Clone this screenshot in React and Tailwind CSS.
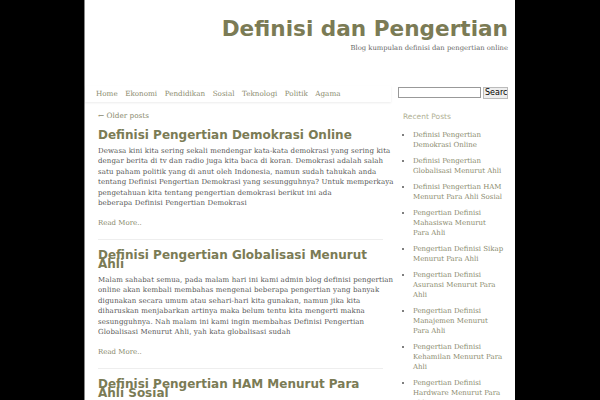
const posts = [
  {
    title: ['Definisi Pengertian Demokrasi Online'],
    lines: [
      'Dewasa kini kita sering sekali mendengar kata-kata demokrasi yang sering kita',
      'dengar berita di tv dan radio juga kita baca di koran. Demokrasi adalah salah',
      'satu paham politik yang di anut oleh Indonesia, namun sudah tahukah anda',
      'tentang Definisi Pengertian Demokrasi yang sesungguhnya? Untuk memperkaya',
      'pengetahuan kita tentang pengertian demokrasi berikut ini ada',
      'beberapa Definisi Pengertian Demokrasi',
    ],
  },
  {
    title: ['Definisi Pengertian Globalisasi Menurut', 'Ahli'],
    lines: [
      'Malam sahabat semua, pada malam hari ini kami admin blog definisi pengertian',
      'online akan kembali membahas mengenai beberapa pengertian yang banyak',
      'digunakan secara umum atau sehari-hari kita gunakan, namun jika kita',
      'diharuskan menjabarkan artinya maka belum tentu kita mengerti makna',
      'sesungguhnya. Nah malam ini kami ingin membahas Definisi Pengertian',
      'Globalisasi Menurut Ahli, yah kata globalisasi sudah',
    ],
  },
  {
    title: ['Definisi Pengertian HAM Menurut Para', 'Ahli Sosial'],
    lines: [
      'Hak asasi manusia adalah hak dasar yang dimiliki oleh setiap manusia sejak',
      'lahir dan merupakan anugerah dari Tuhan Yang Maha Esa.',
    ],
  },
];

const recent = [
  'Definisi Pengertian Demokrasi Online',
  'Definisi Pengertian Globalisasi Menurut Ahli',
  'Definisi Pengertian HAM Menurut Para Ahli Sosial',
  'Pengertian Definisi Mahasiswa Menurut Para Ahli',
  'Pengertian Definisi Sikap Menurut Para Ahli',
  'Pengertian Definisi Asuransi Menurut Para Ahli',
  'Pengertian Definisi Manajemen Menurut Para Ahli',
  'Pengertian Definisi Kehamilan Menurut Para Ahli',
  'Pengertian Definisi Hardware Menurut Para Ahli',
];

const menu = ['Home', 'Ekonomi', 'Pendidikan', 'Sosial', 'Teknologi', 'Politik', 'Agama'];

export default function App() {
  return (
    <div className="h-[400px] w-[600px] overflow-hidden bg-black">
      <div className="ml-[84px] h-full w-[431px] border-l border-[#888] bg-white font-['DejaVu_Serif',serif]">
        {/* Header */}
        <div className="flex h-[86px] flex-col items-end pr-[7px] pt-[15px]">
          <h1 className="font-['DejaVu_Sans',sans-serif] text-[21.6px] font-bold leading-[28px] text-[#7b7b55]">
            Definisi dan Pengertian
          </h1>
          <p className="text-[6.8px] leading-[10px] text-[#666]">
            Blog kumpulan definisi dan pengertian online
          </p>
        </div>

        <div className="flex">
          {/* Main column */}
          <div className="w-[306px] shrink-0">
            <div className="flex h-[16px] items-center gap-[7.5px] pl-[11px] shadow-[0_1px_2px_rgba(0,0,0,0.08)] text-[7.2px] text-[#8a8a6e]">
              {menu.map((m) => (
                <span key={m}>{m}</span>
              ))}
            </div>
            <div className="pl-[13px] pr-[8px]">
              <p className="mt-[8px] text-[7.3px] leading-[12px] text-[#8a8a6e]">← Older posts</p>
              {posts.map((post, i) => (
                <div key={i} className={i > 0 ? 'mt-[10px] border-t border-[#eee] pt-[10px]' : 'mt-[8px]'}>
                  <h2 className="pt-[1px] font-['DejaVu_Sans',sans-serif] text-[12px] font-bold leading-[9.5px] text-[#7b7b55]">
                    {post.title.map((t, j) => (
                      <span key={j} className="block whitespace-nowrap">
                        {t}
                      </span>
                    ))}
                  </h2>
                  <div className="mt-[5px] text-[7px] leading-[10.5px] tracking-[0.12px] text-[#555]">
                    {post.lines.map((l, j) => (
                      <span key={j} className="block whitespace-nowrap">
                        {l}
                      </span>
                    ))}
                  </div>
                  <p className="mt-[8px] text-[7px] leading-[12px] text-[#8a8a6e]">Read More..</p>
                </div>
              ))}
            </div>
          </div>

          {/* Sidebar */}
          <div className="ml-[7px] w-[111px] -mt-[1px]">
            <div className="flex h-[14px] items-start pt-[2px]">
              <input className="h-[11px] w-[83px] border border-[#999] bg-white" />
              <button className="ml-[2px] h-[12px] w-[25px] overflow-hidden whitespace-nowrap border border-[#bbb] bg-[#eee] pl-[1px] text-left font-['DejaVu_Sans',sans-serif] text-[8px] leading-[10px] text-black">
                Search
              </button>
            </div>
            <div className="pl-[5px]">
              <h3 className="mt-[12px] font-['DejaVu_Sans',sans-serif] text-[7.5px] leading-[12px] text-[#b0b094]">
                Recent Posts
              </h3>
              <ul className="mt-[6.5px] list-disc pl-[10px] pr-[5px] text-[7px] leading-[10px] text-[#8a8a6e] marker:text-[#555]">
                {recent.map((r) => (
                  <li key={r} className="mb-[6px]">
                    {r}
                  </li>
                ))}
              </ul>
            </div>
          </div>
        </div>
      </div>
    </div>
  );
}
